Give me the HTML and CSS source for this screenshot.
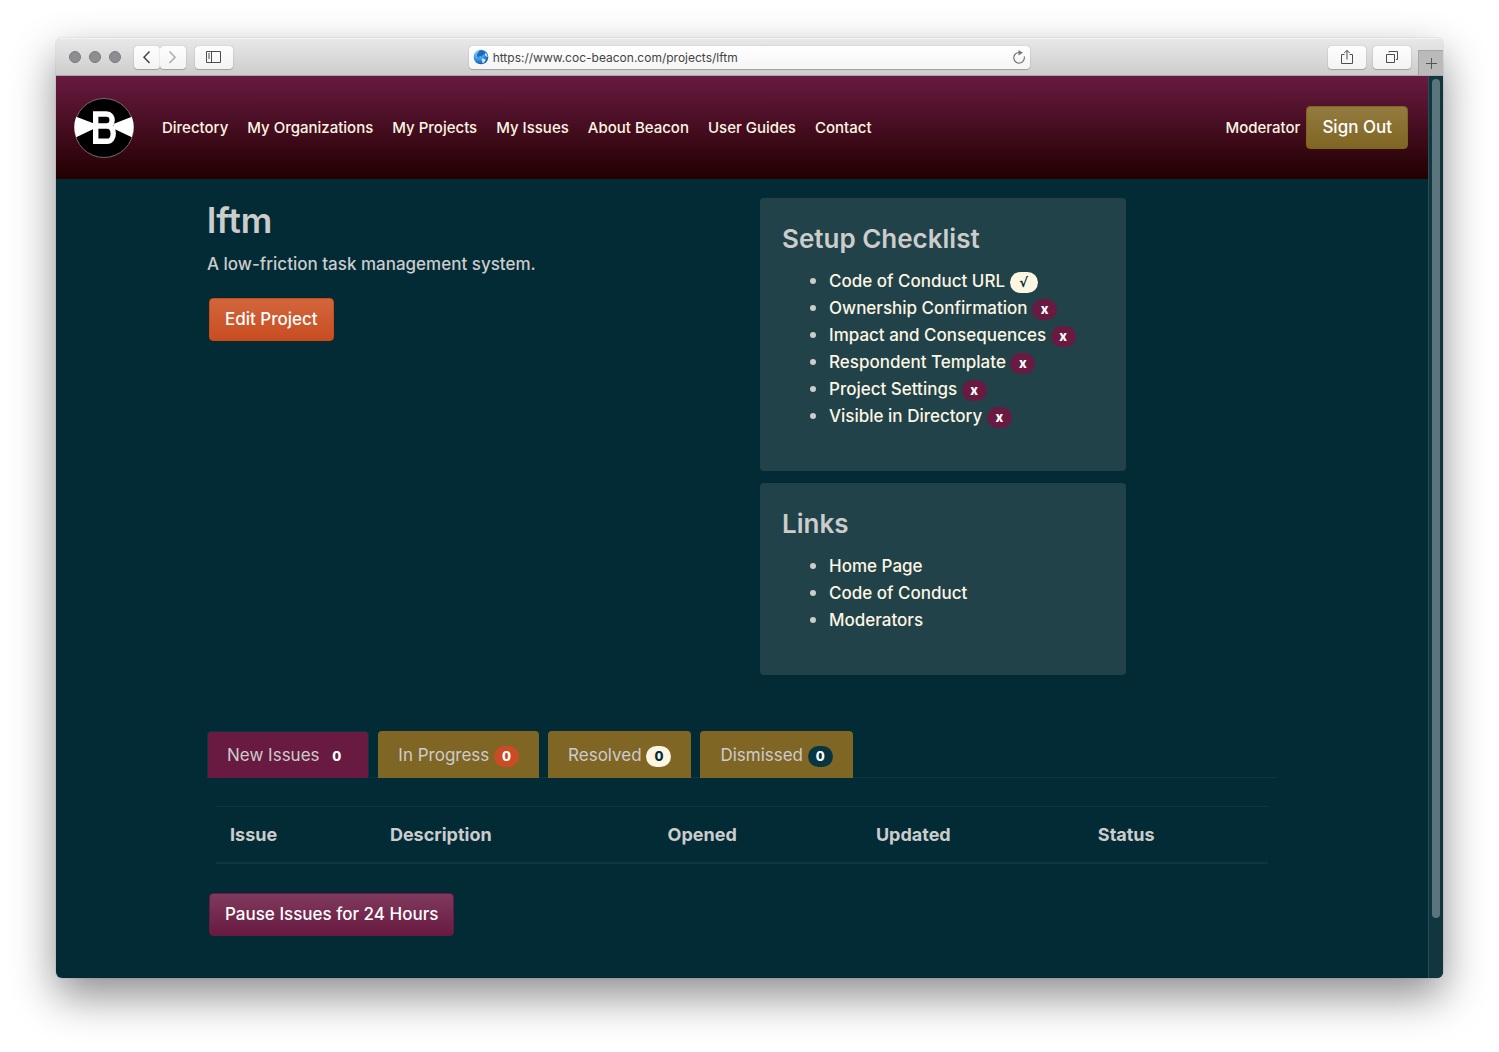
FILE: index.html
```
<!DOCTYPE html>
<html lang="en">
<head>
<meta charset="utf-8">
<title>lftm - Beacon</title>
<link rel="stylesheet" href="styles.css">
</head>
<body>
<div class="window">
  <div class="toolbar">
    <div class="toolbar-side">
      <div class="lights"><span class="light"></span><span class="light"></span><span class="light"></span></div>
      <div class="history">
        <button class="tool tool-small" type="button" aria-label="Back"><svg width="26" height="22" viewBox="0 0 26 22"><path d="M15.500 5.500L10 11.200L15.500 17" fill="none" stroke="#444" stroke-width="1.500"/></svg></button>
        <button class="tool tool-small" type="button" aria-label="Forward"><svg width="26" height="22" viewBox="0 0 26 22"><path d="M9.500 5.500L15 11.200L9.500 17" fill="none" stroke="#aaa" stroke-width="1.500"/></svg></button>
      </div>
      <button class="tool" type="button" aria-label="Sidebar"><svg width="16" height="12" viewBox="0 0 16 12"><path d="M.5.5h14v11H.5zM5.500.5v11M2 3h2M2 5h2M2 7h2" fill="none" stroke="#4d4d4d"/></svg></button>
    </div>
    <div class="address">
      <svg width="16" height="16" viewBox="0 0 16 16"><defs><radialGradient id="sea" cx=".35" cy=".25" r=".8"><stop offset="0" stop-color="#8fd4fb"/><stop offset=".45" stop-color="#3da5f0"/><stop offset="1" stop-color="#0f4fa5"/></radialGradient></defs><circle cx="8" cy="8" r="7.300" fill="url(#sea)"/><path d="M7 1.300l3 .3 2.600 2-1.200 1.600-1.500.5-1 2-1.600-.6-1.300.8.400 1-1.600-.8-1-1.800.8-2z" fill="#2368b5"/><path d="M8.500 9.500l2.500.2 1.800 1-1.300 2.300-1.800 1.600-.6-2.300zM12.300 4l1.700 1.500.6 2.500-1.400-.4-1.300-1.600z" fill="#cfe6f5"/></svg>
      <input class="url" type="text" aria-label="Address" value="https://www.coc-beacon.com/projects/lftm">
      <button class="reload" type="button" aria-label="Reload"><svg width="14" height="14" viewBox="0 0 14 14"><path d="M12.200 6.500A5.300 5.300 0 1 1 7 2.500" fill="none" stroke="#777" stroke-width="1.200"/><path d="M6.500 0l4.500 2.700-4.500 2.700z" fill="#777"/></svg></button>
    </div>
    <div class="toolbar-side toolbar-end">
      <button class="tool" type="button" aria-label="Share"><svg width="14" height="16" viewBox="0 0 14 16"><path d="M4.500 5.500h-3v9h11v-9h-3M7 10.500V1.500M4.300 4L7 1.300 9.700 4" fill="none" stroke="#4d4d4d"/></svg></button>
      <button class="tool" type="button" aria-label="Tabs"><svg width="14" height="14" viewBox="0 0 14 14"><path d="M1.500 4.500h8v8h-8zM4 2.500v-1h8.500v8H11" fill="none" stroke="#4d4d4d"/></svg></button>
      <button class="new-tab" type="button" aria-label="New tab"><svg width="11" height="11" viewBox="0 0 11 11"><path d="M5.500 0v11M0 5.500h11" fill="none" stroke="#555"/></svg></button>
    </div>
  </div>

  <div class="viewport">
    <div class="page">
      <header class="header">
        <a class="brand" href="#" aria-label="Beacon"><svg width="60" height="60" viewBox="0 0 60 60"><circle cx="30" cy="30" r="29.500" fill="#000" stroke="#7a6770"/><path d="M2.200 18.800L20 25.500v5.200L2.200 39.200A29.500 29.500 0 0 1 2.200 18.800zM57.800 18.800L39.300 26v4.500l18.500 8.700A29.500 29.500 0 0 0 57.800 18.800z" fill="#fff"/><path d="M21.700 16h10.800c7.500 0 7.500 12 0 12H21.700h11.300c8.300 0 8.300 15.300 0 15.300H21.700z" fill="#000" stroke="#fff" stroke-width="5.400"/></svg></a>
        <nav class="nav">
          <a href="#">Directory</a>
          <a href="#">My Organizations</a>
          <a href="#">My Projects</a>
          <a href="#">My Issues</a>
          <a href="#">About Beacon</a>
          <a href="#">User Guides</a>
          <a href="#">Contact</a>
        </nav>
        <div class="account">
          <a href="#">Moderator</a>
          <button class="btn" type="button">Sign Out</button>
        </div>
      </header>

      <main class="container">
        <div class="overview">
          <section class="summary">
            <h1>lftm</h1>
            <p>A low-friction task management system.</p>
            <button class="btn btn-orange" type="button">Edit Project</button>
          </section>
          <aside class="panels">
            <section class="panel">
              <h2>Setup Checklist</h2>
              <ul>
                <li><a href="#">Code of Conduct URL</a> <span class="badge badge-cream badge-check">√</span></li>
                <li><a href="#">Ownership Confirmation</a> <span class="badge badge-wine">x</span></li>
                <li><a href="#">Impact and Consequences</a> <span class="badge badge-wine">x</span></li>
                <li><a href="#">Respondent Template</a> <span class="badge badge-wine">x</span></li>
                <li><a href="#">Project Settings</a> <span class="badge badge-wine">x</span></li>
                <li><a href="#">Visible in Directory</a> <span class="badge badge-wine">x</span></li>
              </ul>
            </section>
            <section class="panel">
              <h2>Links</h2>
              <ul>
                <li><a href="#">Home Page</a></li>
                <li><a href="#">Code of Conduct</a></li>
                <li><a href="#">Moderators</a></li>
              </ul>
            </section>
          </aside>
        </div>

        <nav class="tabs">
          <a class="tab tab-active" href="#">New Issues <span class="badge badge-wine">0</span></a>
          <a class="tab" href="#">In Progress <span class="badge badge-orange">0</span></a>
          <a class="tab" href="#">Resolved <span class="badge badge-cream">0</span></a>
          <a class="tab" href="#">Dismissed <span class="badge badge-teal">0</span></a>
        </nav>

        <div class="issues">
          <table>
            <thead>
              <tr><th class="col-issue">Issue</th><th class="col-description">Description</th><th class="col-opened">Opened</th><th class="col-updated">Updated</th><th class="col-status">Status</th></tr>
            </thead>
          </table>
        </div>

        <button class="btn btn-wine" type="button">Pause Issues for 24 Hours</button>
      </main>
    </div>
    <div class="scrollbar"><div class="thumb"></div></div>
  </div>
</div>
</body>
</html>
```
FILE: styles.css
```
* {
  box-sizing: border-box;
}

body {
  margin: 0;
  padding: 38px 56px 74px;
  background: #fff;
  color: #ccc;
  font: 17px/27px Inter, "Liberation Sans", sans-serif;
}

a {
  color: #fdf6e3;
  text-decoration: none;
}

button,
input {
  font: inherit;
}

/* Browser window */
.window {
  display: flex;
  flex-direction: column;
  min-height: calc(100vh - 112px);
  border-radius: 6px;
  overflow: hidden;
  box-shadow: 0 0 1px rgba(0, 0, 0, .5), 0 18px 44px rgba(0, 0, 0, .45);
}

.toolbar {
  display: flex;
  align-items: center;
  height: 38px;
  background: linear-gradient(#e8e8e8, #cdcdcd);
  border-top: 1px solid #f4f4f4;
  border-bottom: 1px solid #aaa;
}

.toolbar-side {
  display: flex;
  flex: 1;
  align-items: center;
}

.toolbar-end {
  justify-content: flex-end;
  align-self: stretch;
  gap: 7px;
}

.lights {
  display: flex;
  gap: 8px;
  margin: 0 13px;
}

.light {
  width: 12px;
  height: 12px;
  border: 1px solid #7a797e;
  border-radius: 50%;
  background: #8e8d92;
}

.history {
  display: flex;
  margin-right: 9px;
}

.tool {
  display: flex;
  align-items: center;
  justify-content: center;
  width: 38px;
  height: 23px;
  padding: 0;
  border: 0;
  border-radius: 4px;
  background: linear-gradient(#fefefe, #f3f3f3);
  box-shadow: 0 0 1px rgba(0, 0, 0, .4), 0 1px 1px rgba(0, 0, 0, .2);
}

.tool-small {
  width: 26px;
}

.address {
  display: flex;
  align-items: center;
  width: 40.500%;
  height: 23px;
  padding: 0 4px;
  border-radius: 4px;
  background: linear-gradient(#fff, #f5f5f5);
  box-shadow: 0 0 1px rgba(0, 0, 0, .4), 0 1px 1px rgba(0, 0, 0, .2);
}

.url {
  flex: 1;
  min-width: 0;
  padding: 1px 4px 0;
  border: 0;
  background: none;
  color: #444;
  font-size: 12px;
  line-height: 20px;
}

.reload {
  display: flex;
  padding: 0;
  border: 0;
  background: none;
}

.new-tab {
  display: flex;
  align-items: center;
  justify-content: center;
  align-self: flex-end;
  width: 25px;
  height: 25px;
  padding: 0;
  border: 1px solid #a5a5a5;
  border-width: 1px 0 0 1px;
  background: #bababa;
}

.viewport {
  display: flex;
  flex: 1;
  background: #022b35;
}

.page {
  flex: 1;
}

.scrollbar {
  width: 15px;
  padding: 3px 3px 0;
  border-left: 1px solid #2b4d56;
  background: #12363f;
}

.thumb {
  width: 8px;
  height: 93.300%;
  border-radius: 4px;
  background: #5b757c;
}

/* Site header */
.header {
  display: flex;
  align-items: center;
  height: 103px;
  padding: 0 20px 0 18px;
  background: linear-gradient(#691a40, #220000);
  font-size: 15px;
  font-weight: 500;
}

.brand {
  display: flex;
}

.nav {
  display: flex;
  flex: 1;
  gap: 19px;
  margin-left: 28px;
}

.account {
  display: flex;
  align-items: center;
  gap: 6px;
}

.btn {
  padding: 6px 15px;
  border: 1px solid #80651f;
  border-radius: 4px;
  background: linear-gradient(#937b40, #806522);
  color: #fff;
  font-size: 17px;
  font-weight: 500;
  line-height: 29px;
}

.btn-orange {
  border-color: #cb4b16;
  background: linear-gradient(#d2663d, #c94c20);
}

.btn-wine {
  border-color: #691a40;
  background: linear-gradient(#7f3a5d, #691a40);
}

/* Project page */
.container {
  max-width: 1072px;
  margin: 0 auto;
  padding: 19px 1px 41px;
}

.overview {
  display: flex;
  gap: 16px;
}

.summary {
  flex: 1;
}

h1,
h2,
p {
  margin: 0;
}

h1 {
  padding-top: 2px;
  font-size: 35px;
  font-weight: 600;
  line-height: 40px;
}

.summary p {
  margin: 11px 0 20px;
  font-weight: 500;
}

.container .btn {
  margin-left: 2px;
}

.panels {
  display: flex;
  flex-direction: column;
  gap: 12px;
  width: 366px;
  margin-right: 151px;
}

.panel {
  padding: 25px 22px 42px;
  border-radius: 4px;
  background: #214249;
}

h2 {
  font-size: 26px;
  font-weight: 600;
  line-height: 32px;
}

.panel ul {
  margin: 12px 0 0;
  padding-left: 47px;
}

.panel li {
  height: 27px;
  font-weight: 500;
}

.panel li::marker {
  font-size: 20px;
}

.badge {
  display: inline-block;
  min-width: 25px;
  padding: 0 8px;
  border-radius: 11px;
  font-size: 13px;
  font-weight: 800;
  line-height: 21px;
  text-align: center;
  vertical-align: middle;
}

.badge-wine {
  background: #691a40;
  color: #fff;
}

.badge-cream {
  background: #fdf6e3;
  color: #022b35;
}

.badge-orange {
  background: #cb4b25;
  color: #fff;
}

.badge-teal {
  background: #073642;
  color: #fff;
}

.badge-check {
  min-width: 28px;
  font-family: "DejaVu Sans", sans-serif;
  font-style: italic;
}

.tabs {
  display: flex;
  gap: 9px;
  margin-top: 56px;
  border-bottom: 1px solid #0b3740;
}

.tab {
  margin-bottom: -1px;
  padding: 11px 20px 9px;
  border-radius: 4px 4px 0 0;
  background: #806625;
  color: #ccc;
}

.tab-active {
  border: 1px solid #0b3740;
  border-width: 1px 1px 0;
  padding: 10px 19px 9px;
  background: #691a40;
}

.issues {
  padding: 28px 9px 29px;
}

table {
  width: 100%;
  border-collapse: collapse;
  table-layout: fixed;
}

th {
  padding: 14px;
  border-top: 1px solid #0b3740;
  border-bottom: 2px solid #0b3740;
  font-size: 18px;
  font-weight: 700;
  text-align: left;
}

.col-issue {
  width: 15.200%;
}

.col-description {
  width: 26.400%;
}

.col-opened {
  width: 19.800%;
}

.col-updated {
  width: 21.100%;
}

.col-status {
  width: 17.500%;
}
```
